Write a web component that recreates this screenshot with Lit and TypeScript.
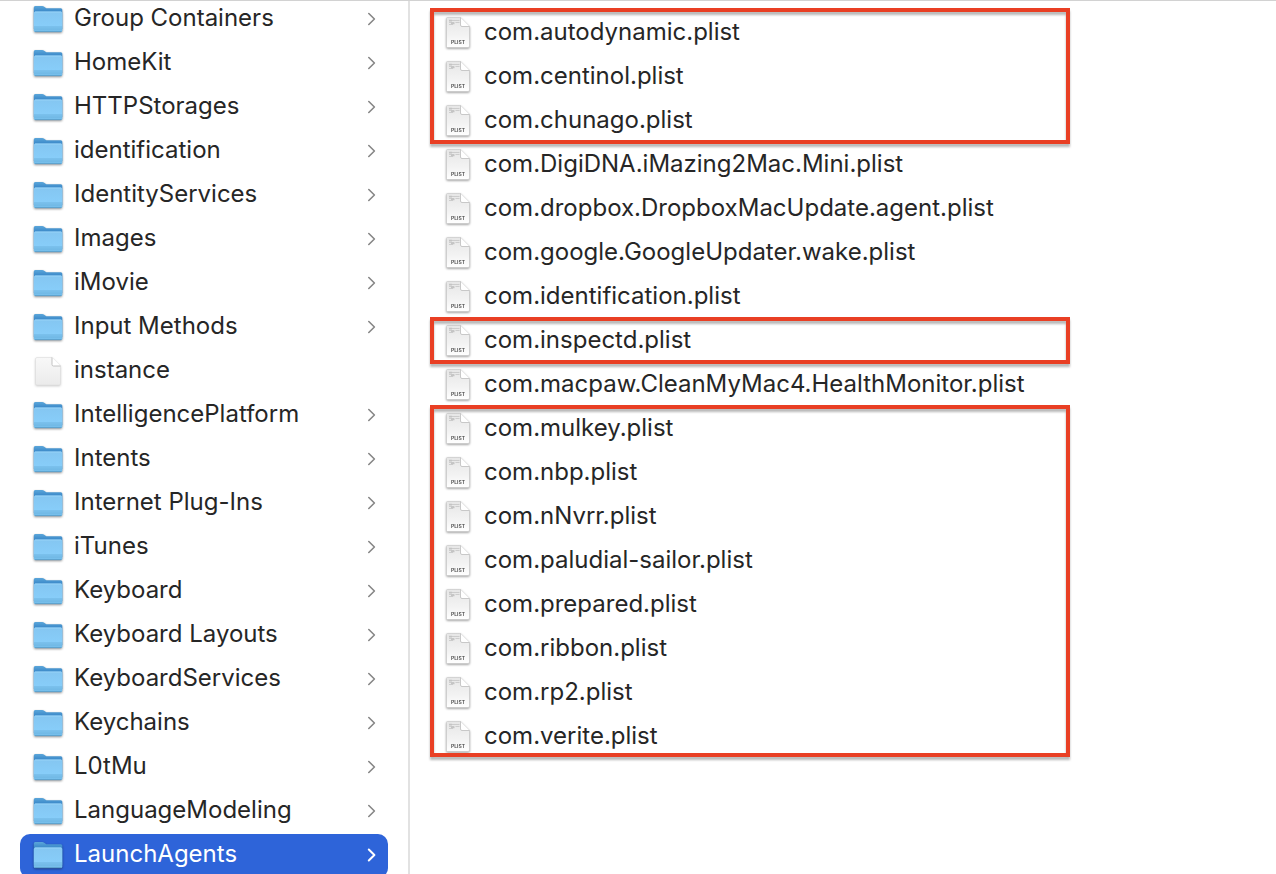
import { LitElement, html, css, svg, nothing } from "lit";
import { customElement, property, state } from "lit/decorators.js";

type Kind = "folder" | "document" | "plist";

interface Entry {
  name: string;
  kind: Kind;
}

interface Group {
  files: string[];
  marked: boolean;
}

const folder = (name: string): Entry => ({ name, kind: "folder" });

const library: Entry[] = [
  folder("Group Containers"),
  folder("HomeKit"),
  folder("HTTPStorages"),
  folder("identification"),
  folder("IdentityServices"),
  folder("Images"),
  folder("iMovie"),
  folder("Input Methods"),
  { name: "instance", kind: "document" },
  folder("IntelligencePlatform"),
  folder("Intents"),
  folder("Internet Plug-Ins"),
  folder("iTunes"),
  folder("Keyboard"),
  folder("Keyboard Layouts"),
  folder("KeyboardServices"),
  folder("Keychains"),
  folder("L0tMu"),
  folder("LanguageModeling"),
  folder("LaunchAgents"),
];

const agents: Group[] = [
  {
    marked: true,
    files: ["com.autodynamic.plist", "com.centinol.plist", "com.chunago.plist"],
  },
  {
    marked: false,
    files: [
      "com.DigiDNA.iMazing2Mac.Mini.plist",
      "com.dropbox.DropboxMacUpdate.agent.plist",
      "com.google.GoogleUpdater.wake.plist",
      "com.identification.plist",
    ],
  },
  { marked: true, files: ["com.inspectd.plist"] },
  { marked: false, files: ["com.macpaw.CleanMyMac4.HealthMonitor.plist"] },
  {
    marked: true,
    files: [
      "com.mulkey.plist",
      "com.nbp.plist",
      "com.nNvrr.plist",
      "com.paludial-sailor.plist",
      "com.prepared.plist",
      "com.ribbon.plist",
      "com.rp2.plist",
      "com.verite.plist",
    ],
  },
];

const folderArt = svg`
  <defs>
    <linearGradient id="back" x1="0" y1="0" x2="0" y2="1">
      <stop offset="0" stop-color="#5ba6da" />
      <stop offset="0.25" stop-color="#3a88c8" />
    </linearGradient>
    <linearGradient id="front" x1="0" y1="0" x2="0" y2="1">
      <stop offset="0" stop-color="#84c6f1" />
      <stop offset="0.7" stop-color="#87cdf9" />
      <stop offset="1" stop-color="#70bae7" />
    </linearGradient>
  </defs>
  <path fill="url(#back)" d="M1.800 5.500Q1.800 4 3.300 4H10.200Q11.400 4 12.200 4.700L13.600 5.800Q14.300 6.300 15.300 6.300H28.800Q30.300 6.300 30.300 7.800V27H1.800Z" />
  <path fill="url(#front)" d="M1.800 11Q1.800 9.500 3.300 9.500H28.800Q30.300 9.500 30.300 11V28.500Q30.300 30 28.800 30H3.300Q1.800 30 1.800 28.500Z" />
  <path stroke="#9ed7fa" stroke-width="0.800" d="M3 10H29.300" />
  <path stroke="#62a8d4" stroke-width="0.600" d="M2 25H30.200M2 27H30.200" />
  <path stroke="#5596bf" stroke-width="0.800" d="M3 29.700H29.300" />
`;

const documentArt = svg`
  <defs>
    <linearGradient id="sheet" x1="0" y1="0" x2="0" y2="1">
      <stop offset="0" stop-color="#f8f8f8" />
      <stop offset="1" stop-color="#ebebeb" />
    </linearGradient>
  </defs>
  <path fill="url(#sheet)" stroke="#d8d8d8" stroke-width="0.500" d="M5 3.500H20L28.500 12V29.500Q28.500 31 27 31H5Q3.500 31 3.500 29.500V5Q3.500 3.500 5 3.500Z" />
  <path fill="#ffffff" d="M20 3.500L28.500 12H21.500Q20 12 20 10.500Z" />
  <path stroke="#b4b4b4" stroke-width="0.800" stroke-linejoin="round" d="M20 3.500V10.500Q20 12 21.500 12H28.500" />
`;

const plistArt = svg`
  <defs>
    <linearGradient id="page" x1="0" y1="0" x2="0" y2="1">
      <stop offset="0" stop-color="#e6e6e6" />
      <stop offset="0.6" stop-color="#f3f3f3" />
      <stop offset="1" stop-color="#ffffff" />
    </linearGradient>
  </defs>
  <path fill="url(#page)" stroke="#c2c2c2" stroke-width="0.500" d="M5.500 1.500H18.500L27.500 10.500V30Q27.500 31.500 26 31.500H5.500Q4.500 31.500 4.500 30.500V2.500Q4.500 1.500 5.500 1.500Z" />
  <path stroke="#c0c0c0" stroke-width="0.700" d="M7 4.500H17.500M7 6.500H12M13.500 6.500H17.500M7 8.500H11" />
  <path fill="#c4c4c4" d="M7 3.800h3v1.800h-3zM9 6.200h3.500v2h-3.500z" />
  <path fill="#ffffff" d="M18.500 1.500L27.500 10.500H20Q18.500 10.500 18.500 9Z" />
  <path stroke="#b4b4b4" stroke-width="0.700" stroke-linejoin="round" d="M18.500 1.500V9Q18.500 10.500 20 10.500H27.500" />
  <text x="16" y="28" text-anchor="middle">PLIST</text>
`;

const art = { folder: folderArt, document: documentArt, plist: plistArt };

@customElement("finder-row")
export class FinderRow extends LitElement {
  @property() name = "";
  @property() kind: Kind = "folder";
  @property({ type: Boolean, reflect: true }) selected = false;

  static styles = css`
    :host {
      display: block;
    }
    .row {
      display: flex;
      align-items: center;
      gap: 10px;
      box-sizing: border-box;
      width: 100%;
      height: 44px;
      margin: 0;
      padding: 0 12px 2px;
      border: 0;
      border-radius: 10px;
      background: transparent;
      color: #262626;
      font: 400 24px/28px Inter, "Liberation Sans", sans-serif;
      text-align: left;
      white-space: nowrap;
    }
    :host([selected]) .row {
      background: #2e64d9;
      color: #ffffff;
    }
    .icon {
      flex: none;
      width: 32px;
      height: 34px;
      fill: none;
      filter: drop-shadow(0 1px 1px rgba(0, 0, 0, 0.4));
    }
    .icon.document {
      filter: drop-shadow(0 1px 1px rgba(0, 0, 0, 0.2));
    }
    .icon text {
      fill: #4a4a4a;
      font: 600 5px Inter, sans-serif;
    }
    .name {
      flex: 1;
      min-width: 0;
      padding-bottom: 2px;
    }
    .chevron {
      flex: none;
      width: 10px;
      height: 14px;
      fill: none;
      stroke: #868686;
      stroke-width: 1.6;
      stroke-linecap: round;
      stroke-linejoin: round;
    }
    :host([selected]) .chevron {
      stroke: #ffffff;
      stroke-width: 2;
    }
  `;

  render() {
    return html`
      <button class="row" type="button" aria-pressed=${this.selected}>
        <svg class="icon ${this.kind}" viewBox="0 0 32 34" aria-hidden="true">${art[this.kind]}</svg>
        <span class="name">${this.name}</span>
        ${this.kind === "folder"
          ? html`<svg class="chevron" viewBox="0 0 10 14" aria-hidden="true">
              <path d="M2.800 1.500L8.400 7L2.800 12.500" />
            </svg>`
          : nothing}
      </button>
    `;
  }
}

@customElement("app-root")
export class AppRoot extends LitElement {
  @state() private current = "LaunchAgents";

  static styles = css`
    :host {
      display: block;
    }
    .browser {
      display: grid;
      grid-template-columns: 410px minmax(0, 1fr);
      box-sizing: border-box;
      height: 100vh;
      overflow: hidden;
      border-top: 1px solid #d2d2d2;
      background: #ffffff;
    }
    .column {
      min-width: 0;
    }
    .library {
      border-right: 2px solid #e2e2e2;
      padding: 0 20px;
    }
    .scrolled {
      margin-top: -3px;
    }
    .agents {
      padding: 11px 20px;
    }
    .group {
      position: relative;
      max-width: 640px;
    }
    .frame {
      position: absolute;
      inset: -3px 0 0;
      border: 4px solid #e93f24;
      filter: drop-shadow(0 3px 1px rgba(0, 0, 0, 0.28));
      pointer-events: none;
    }
    .group:first-child .frame {
      top: -4px;
    }
    .group:last-child .frame {
      bottom: 3px;
    }
  `;

  render() {
    return html`
      <main class="browser">
        <nav class="column library" aria-label="Library">
          <div class="scrolled">
            ${library.map(
              (entry) => html`<finder-row
                .name=${entry.name}
                .kind=${entry.kind}
                ?selected=${entry.name === this.current}
                @click=${() => (this.current = entry.name)}
              ></finder-row>`,
            )}
          </div>
        </nav>
        <section class="column agents" aria-label="LaunchAgents">
          ${agents.map(
            (group) => html`<div class="group">
              ${group.files.map((name) => html`<finder-row .name=${name} .kind=${"plist"}></finder-row>`)}
              ${group.marked ? html`<div class="frame"></div>` : nothing}
            </div>`,
          )}
        </section>
      </main>
    `;
  }
}
